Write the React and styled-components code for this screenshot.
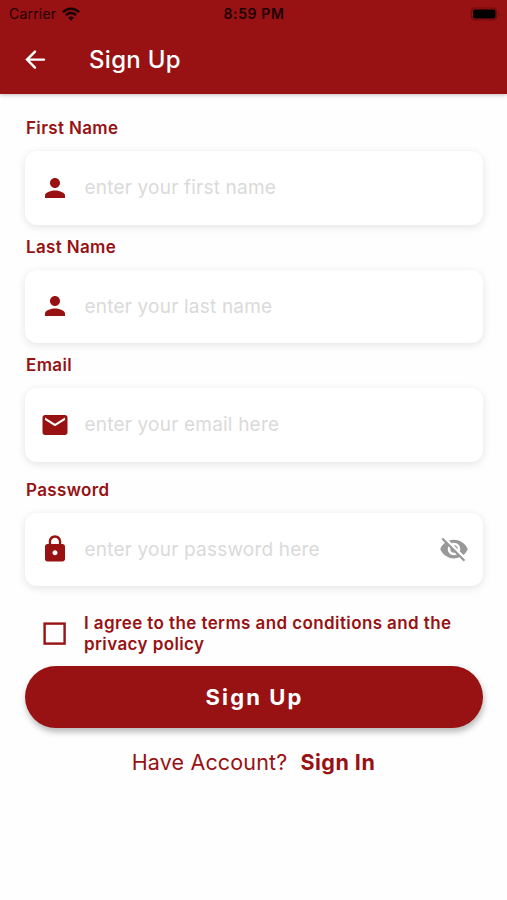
import { useState } from 'react';
import styled, { createGlobalStyle } from 'styled-components';
import {
    MdEmail,
    MdLock,
    MdPerson,
    MdVisibility,
    MdVisibilityOff,
} from 'react-icons/md';

const red = '#981113';

const GlobalStyle = createGlobalStyle`
    * {
        box-sizing: border-box;
    }

    body {
        margin: 0;
        background: #fefefe;
        font-family: Inter, 'Liberation Sans', sans-serif;
    }

    button {
        padding: 0;
        border: 0;
        background: none;
        color: inherit;
        font-family: inherit;
        cursor: pointer;
    }

    svg {
        display: block;
    }
`;

const Screen = styled.div`
    min-height: 100vh;
    color: ${red};
`;

const Header = styled.header`
    height: 94px;
    background-color: ${red};
    box-shadow: 0 1px 4px rgba(0, 0, 0, 0.25);
`;

const StatusBar = styled.div`
    display: grid;
    grid-template-columns: 1fr auto 1fr;
    align-items: center;
    height: 27px;
    padding: 0 7px 0 9px;
    color: #1c0203;
    font-size: 14px;
`;

const Carrier = styled.div`
    display: flex;
    align-items: center;
    gap: 6px;
    letter-spacing: 0.2px;
`;

const Clock = styled.div`
    padding-right: 1px;
    font-size: 14px;
    font-weight: 600;
    letter-spacing: 0.6px;
`;

const Battery = styled.svg`
    justify-self: end;
`;

const TitleBar = styled.div`
    display: flex;
    align-items: center;
    gap: 39px;
    height: 65px;
    padding-left: 20px;
    color: #fff;
`;

const Title = styled.h1`
    margin: 0;
    font-size: 24px;
    font-weight: 500;
    letter-spacing: 0.3px;
`;

const Form = styled.form`
    padding: 24px 24px 0 25px;
`;

const Field = styled.div`
    margin-bottom: ${props => props.$gap || 12}px;
`;

const Label = styled.label`
    display: block;
    height: 20px;
    margin-bottom: 13px;
    padding-left: 1px;
    font-size: 17px;
    font-weight: 600;
    line-height: 20px;
    letter-spacing: 0.35px;
`;

const InputBox = styled.div`
    display: flex;
    align-items: center;
    gap: 15px;
    height: 73.5px;
    padding: 0 14.5px;
    border-radius: 12px;
    background: #fff;
    box-shadow: 0 2px 8px rgba(0, 0, 0, 0.11);
`;

const Input = styled.input`
    flex: 1;
    min-width: 0;
    padding: 0;
    border: 0;
    outline: 0;
    background: none;
    color: ${red};
    font-family: inherit;
    font-size: 19px;
    letter-spacing: 0.2px;

    &::placeholder {
        color: #dadada;
        opacity: 1;
    }
`;

const EyeButton = styled.button`
    color: #989898;
`;

const Terms = styled.div`
    display: flex;
    align-items: center;
    gap: 18px;
    height: 42px;
    padding-left: 18px;
`;

const TermsText = styled.div`
    font-size: 17px;
    font-weight: 600;
    line-height: 21px;
    letter-spacing: 0.4px;
`;

const SubmitButton = styled.button`
    width: 100%;
    height: 62px;
    margin-top: 11px;
    padding-left: 1px;
    border-radius: 31px;
    background-color: ${red};
    box-shadow: 1px 4px 6px rgba(0, 0, 0, 0.28);
    color: #fff;
    font-size: 22px;
    font-weight: 700;
    letter-spacing: 2.1px;
`;

const Footer = styled.div`
    display: flex;
    justify-content: center;
    gap: 13px;
    margin-top: 21px;
    padding-right: 1px;
    font-size: 21.5px;
    line-height: 26px;
    letter-spacing: 0.15px;
`;

const SignIn = styled.button`
    font-size: 21.5px;
    font-weight: 700;
    letter-spacing: 0.5px;
`;

const fields = [
    { id: 'first', label: 'First Name', placeholder: 'enter your first name', Icon: MdPerson },
    { id: 'last', label: 'Last Name', placeholder: 'enter your last name', Icon: MdPerson },
    { id: 'email', label: 'Email', placeholder: 'enter your email here', Icon: MdEmail, gap: 18 },
    { id: 'password', label: 'Password', placeholder: 'enter your password here', Icon: MdLock, gap: 26.5 },
];

function WifiIcon() {
    return (
        <svg width="18" height="14" viewBox="0 0 18 14" fill="none" stroke="currentColor" strokeWidth="2.5">
            <path d="M0.9 5.1C5.5.5 12.5.5 17.1 5.1" />
            <path d="M3.9 8.2C6.8 5.4 11.2 5.4 14.1 8.2" />
            <path d="M9 13.7 6.1 10.8Q9 8.3 11.9 10.8Z" fill="currentColor" stroke="none" />
        </svg>
    );
}

function BatteryIcon() {
    return (
        <Battery width="30" height="14" viewBox="0 0 30 14">
            <rect x="1.5" y="1" width="25" height="12" rx="3.5" fill="none" stroke="#700b0d" strokeWidth="1.2" />
            <rect x="3" y="2.5" width="22.5" height="9" rx="2" fill="#000" />
            <path d="M28 5.2Q30.2 7 28 8.8Z" fill="#700b0d" />
        </Battery>
    );
}

function BackIcon() {
    return (
        <svg
            width="30"
            height="30"
            viewBox="0 0 30 30"
            fill="none"
            stroke="currentColor"
            strokeWidth="2.4"
            strokeLinecap="round"
        >
            <path d="M24 14.6H7.5M15 6.6 7 14.6 15 22.600" strokeLinejoin="miter" />
        </svg>
    );
}

function CheckIcon({ checked }) {
    return (
        <svg width="23" height="23" viewBox="0 0 23 23" fill="none" stroke="currentColor" strokeWidth="2.4">
            <rect x="1.6" y="1.6" width="20" height="20" />
            {checked && <path d="M6 11.5 10 15.5 17 8" />}
        </svg>
    );
}

export default function App() {
    const [showPassword, setShowPassword] = useState(false);
    const [agreed, setAgreed] = useState(false);

    return (
        <Screen>
            <GlobalStyle />
            <Header>
                <StatusBar>
                    <Carrier>
                        <span>Carrier</span>
                        <WifiIcon />
                    </Carrier>
                    <Clock>8:59 PM</Clock>
                    <BatteryIcon />
                </StatusBar>
                <TitleBar>
                    <button type="button" aria-label="Back">
                        <BackIcon />
                    </button>
                    <Title>Sign Up</Title>
                </TitleBar>
            </Header>

            <Form onSubmit={e => e.preventDefault()}>
                {fields.map(({ id, label, placeholder, Icon, gap }) => (
                    <Field key={id} $gap={gap}>
                        <Label htmlFor={id}>{label}</Label>
                        <InputBox>
                            <Icon size={30} />
                            <Input
                                id={id}
                                type={id === 'password' && !showPassword ? 'password' : 'text'}
                                placeholder={placeholder}
                            />
                            {id === 'password' && (
                                <EyeButton
                                    type="button"
                                    aria-label="Toggle password"
                                    onClick={() => setShowPassword(!showPassword)}
                                >
                                    {showPassword ? <MdVisibility size={30} /> : <MdVisibilityOff size={30} />}
                                </EyeButton>
                            )}
                        </InputBox>
                    </Field>
                ))}

                <Terms>
                    <button type="button" aria-label="Agree" onClick={() => setAgreed(!agreed)}>
                        <CheckIcon checked={agreed} />
                    </button>
                    <TermsText>I agree to the terms and conditions and the privacy policy</TermsText>
                </Terms>

                <SubmitButton type="submit">Sign Up</SubmitButton>

                <Footer>
                    <span>Have Account?</span>
                    <SignIn type="button">Sign In</SignIn>
                </Footer>
            </Form>
        </Screen>
    );
}
